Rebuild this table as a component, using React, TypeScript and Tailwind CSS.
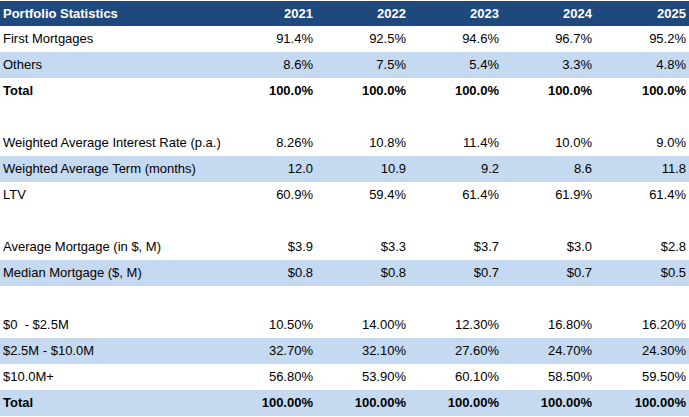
type Row = {
  label: string
  values: string[]
  shade?: boolean
  bold?: boolean
}

const years = ["2021", "2022", "2023", "2024", "2025"]

// null = empty spacer row
const rows: (Row | null)[] = [
  { label: "First Mortgages", values: ["91.4%", "92.5%", "94.6%", "96.7%", "95.2%"] },
  { label: "Others", values: ["8.6%", "7.5%", "5.4%", "3.3%", "4.8%"], shade: true },
  { label: "Total", values: ["100.0%", "100.0%", "100.0%", "100.0%", "100.0%"], bold: true },
  null,
  { label: "Weighted Average Interest Rate (p.a.)", values: ["8.26%", "10.8%", "11.4%", "10.0%", "9.0%"] },
  { label: "Weighted Average Term (months)", values: ["12.0", "10.9", "9.2", "8.6", "11.8"], shade: true },
  { label: "LTV", values: ["60.9%", "59.4%", "61.4%", "61.9%", "61.4%"] },
  null,
  { label: "Average Mortgage (in $, M)", values: ["$3.9", "$3.3", "$3.7", "$3.0", "$2.8"] },
  { label: "Median Mortgage ($, M)", values: ["$0.8", "$0.8", "$0.7", "$0.7", "$0.5"], shade: true },
  null,
  { label: "$0  - $2.5M", values: ["10.50%", "14.00%", "12.30%", "16.80%", "16.20%"] },
  { label: "$2.5M - $10.0M", values: ["32.70%", "32.10%", "27.60%", "24.70%", "24.30%"], shade: true },
  { label: "$10.0M+", values: ["56.80%", "53.90%", "60.10%", "58.50%", "59.50%"] },
  { label: "Total", values: ["100.00%", "100.00%", "100.00%", "100.00%", "100.00%"], shade: true, bold: true },
]

const cols = "grid grid-cols-[223px_93px_93px_93px_93px_94px]"

export default function App() {
  return (
    <div className="w-[689px] h-[417px] bg-white pt-px text-[13px] text-black font-['Liberation_Sans',Arial,sans-serif]">
      <div className={`${cols} h-[25px] bg-[#1f497d] text-white font-bold`}>
        <div className="flex items-center pl-[3px]">Portfolio Statistics</div>
        {years.map(y => (
          <div key={y} className="flex items-center justify-end pr-[3px]">{y}</div>
        ))}
      </div>
      {rows.map((row, i) =>
        row === null ? (
          <div key={i} className="h-[26px]" />
        ) : (
          <div
            key={i}
            className={`${cols} h-[26px] ${row.shade ? "bg-[#c5d9f1]" : ""} ${row.bold ? "font-bold" : ""}`}
          >
            <div className="flex items-center pl-[3px] whitespace-pre">{row.label}</div>
            {row.values.map((v, j) => (
              <div key={j} className="flex items-center justify-end pr-[3px]">{v}</div>
            ))}
          </div>
        )
      )}
    </div>
  )
}
